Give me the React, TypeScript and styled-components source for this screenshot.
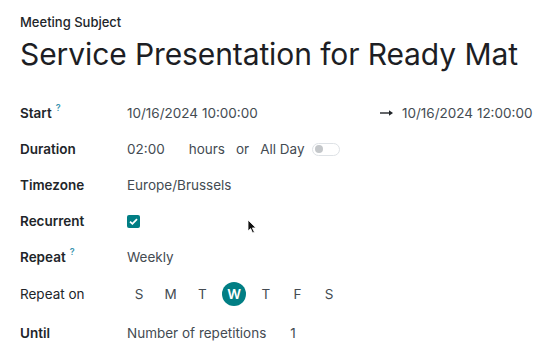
import styled, { createGlobalStyle } from "styled-components";

const GlobalStyle = createGlobalStyle`
  html, body {
    margin: 0;
    padding: 0;
    background: #ffffff;
  }
  body {
    font-family: Inter, "Noto Sans", "Liberation Sans", sans-serif;
    color: #212529;
    -webkit-font-smoothing: antialiased;
  }
`;

// ==================== Styled Components ====================

const Sheet = styled.div`
  position: relative;
  width: 545px;
  height: 355px;
  padding: 14px 0 0 20px;
  box-sizing: border-box;
  overflow: hidden;
`;

const SubjectLabel = styled.div`
  font-size: 13px;
  font-weight: 500;
  line-height: 16px;
  color: #212529;
`;

const Title = styled.h1`
  margin: 5px 0 0;
  font-size: 30px;
  font-weight: 400;
  line-height: 38px;
  letter-spacing: -0.1px;
  color: #1d1e24;
`;

const Fields = styled.div`
  display: grid;
  grid-template-columns: 107px 1fr;
  grid-template-rows: repeat(5, 36px) 38px 40px;
  align-items: center;
  margin-top: 22px;
`;

const Label = styled.div<{ $plain?: boolean }>`
  font-size: 13.5px;
  font-weight: ${({ $plain }) => ($plain ? 400 : 600)};
  color: #212529;
  display: flex;
  align-items: flex-start;
`;

const Help = styled.sup`
  font-size: 9px;
  font-weight: 600;
  color: #3a95b0;
  margin-left: 4px;
  line-height: 1;
  position: relative;
  top: -2px;
`;

const Value = styled.div`
  font-size: 13.5px;
  color: #444b52;
  display: flex;
  align-items: center;
`;

const DateCell = styled.span`
  width: 253px;
`;

const Arrow = styled.span`
  width: 22px;
  display: inline-flex;
  align-items: center;
  color: #212529;
`;

const Word = styled.span<{ $gap?: number }>`
  margin-right: ${({ $gap }) => $gap ?? 0}px;
`;

const Toggle = styled.span`
  position: relative;
  width: 28px;
  height: 13px;
  border: 1px solid #dee2e6;
  border-radius: 8px;
  margin-left: 7px;
  box-sizing: border-box;
  &::after {
    content: "";
    position: absolute;
    left: 2px;
    top: 1.5px;
    width: 8px;
    height: 8px;
    border-radius: 50%;
    background: #c4c7ca;
  }
`;

const Check = styled.span`
  width: 13px;
  height: 13px;
  border-radius: 2px;
  background: #017e84;
  display: inline-flex;
  align-items: center;
  justify-content: center;
`;

const Days = styled.div`
  display: flex;
  align-items: center;
`;

const Day = styled.span<{ $active?: boolean }>`
  width: 24px;
  height: 24px;
  margin-right: 7.7px;
  border-radius: 50%;
  display: inline-flex;
  align-items: center;
  justify-content: center;
  font-size: 13.5px;
  font-weight: ${({ $active }) => ($active ? 600 : 400)};
  color: ${({ $active }) => ($active ? "#ffffff" : "#444b52")};
  background: ${({ $active }) => ($active ? "#017e84" : "transparent")};
`;

const Cursor = styled.svg`
  position: absolute;
  left: 247px;
  top: 219px;
`;

// ==================== Component ====================

const days = ["S", "M", "T", "W", "T", "F", "S"];

export default function App() {
  return (
    <>
      <GlobalStyle />
      <Sheet>
        <SubjectLabel>Meeting Subject</SubjectLabel>
        <Title>Service Presentation for Ready Mat</Title>

        <Fields>
          <Label>
            Start<Help>?</Help>
          </Label>
          <Value>
            <DateCell>10/16/2024 10:00:00</DateCell>
            <Arrow>
              <svg width="14" height="8" viewBox="0 0 14 8">
                <path d="M0 4h11" stroke="#212529" strokeWidth="1.4" />
                <path d="M9 1.2L13 4L9 6.8z" fill="#212529" />
              </svg>
            </Arrow>
            <span>10/16/2024 12:00:00</span>
          </Value>

          <Label>Duration</Label>
          <Value>
            <Word $gap={24}>02:00</Word>
            <Word $gap={11}>hours</Word>
            <Word $gap={11}>or</Word>
            <Word>All Day</Word>
            <Toggle />
          </Value>

          <Label>Timezone</Label>
          <Value>Europe/Brussels</Value>

          <Label>Recurrent</Label>
          <Value>
            <Check>
              <svg width="9" height="7" viewBox="0 0 9 7">
                <path
                  d="M1 3.6L3.4 5.8L8 1.2"
                  fill="none"
                  stroke="#ffffff"
                  strokeWidth="1.8"
                />
              </svg>
            </Check>
          </Value>

          <Label>
            Repeat<Help>?</Help>
          </Label>
          <Value>Weekly</Value>

          <Label $plain>Repeat on</Label>
          <Days>
            {days.map((d, i) => (
              <Day key={i} $active={i === 3}>
                {d}
              </Day>
            ))}
          </Days>

          <Label>Until</Label>
          <Value>
            <Word $gap={24}>Number of repetitions</Word>
            <span>1</span>
          </Value>
        </Fields>

        <Cursor width="10" height="15" viewBox="0 0 10 15">
          <path
            d="M1 1L1 12L3.6 9.6L5.6 14L7.4 13.2L5.4 8.9L9 8.9Z"
            fill="#111"
            stroke="#fff"
            strokeWidth="0.8"
          />
        </Cursor>
      </Sheet>
    </>
  );
}
